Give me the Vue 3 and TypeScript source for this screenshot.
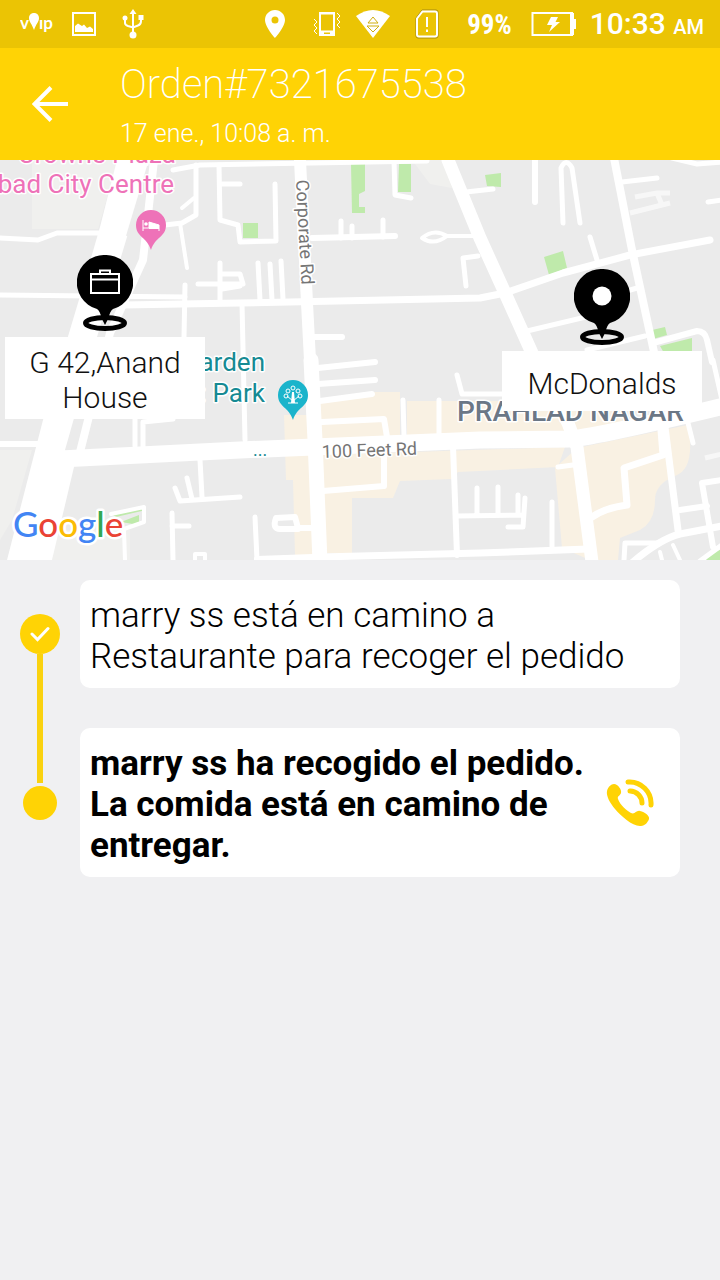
<script setup lang="ts">
interface Place {
  id: string
  name: string
  kind: 'home' | 'restaurant'
}

interface Step {
  id: number
  text: string
  done: boolean
}

const order = { number: 'Orden#7321675538', date: '17 ene., 10:08 a. m.' }

const places: Place[] = [
  { id: 'customer', name: 'G 42,Anand House', kind: 'home' },
  { id: 'restaurant', name: 'McDonalds', kind: 'restaurant' },
]

const steps: Step[] = [
  { id: 1, text: 'marry ss está en camino a Restaurante para recoger el pedido', done: true },
  { id: 2, text: 'marry ss ha recogido el pedido. La comida está en camino de entregar.', done: false },
]

const roads: { width: number; paths: string[] }[] = [
  {
    width: 4,
    paths: [
      'M180 223L187 268', 'M182 208L194 198', 'M445 236L475 236M422 238Q434 228 447 236Q434 246 422 238Z',
      'M673 545L680 560', 'M660 552L662 560', 'M195 562V554H205V562', 'M124 530L125 560',
      'M111 514L144 507V522L124 529',
    ],
  },
  {
    width: 5,
    paths: [
      'M173 170L200 165L427 161', 'M0 295L185 297', 'M0 238L38 240L57 233H99',
      'M196 165V215L182 223L165 225', 'M219 165L220 220L238 225L240 242L276 241L275 184', 'M222 184H240',
      'M185 285L184 337', 'M198 284H240M220 263V303M221 274H240L243 284M222 289L240 286',
      'M258 263L260 300M270 264L272 300M281 261L283 299',
      'M341 221V238M352 226V238M383 220V237', 'M394 160L395 195L411 198', 'M466 192L493 189',
      'M478 256L463 258L466 286', 'M242 303L245 440',
      'M563 223L561 168Q566 157 572 168L580 223', 'M590 237L597 260', 'M622 182L657 178', 'M708 202L722 200',
      'M627 291L637 288', 'M527 331L590 316', 'M587 350L645 336', 'M672 158L697 164L722 162',
      'M713 360L722 400', 'M135 415V446M143 446V422L173 419', 'M200 460L202 497M175 488L180 501L240 497M187 478L192 499',
      'M172 513L173 560M172 526H189', 'M403 400L404 435M439 400V433', 'M457 375L462 394H502',
      'M457 516L524 515M498 487V515M518 495V515M525 498L523 527H508M477 488V515', 'M552 502V550',
      'M255 517L257 560', 'M558 467L573 465', 'M688 423L693 443', 'M624 560L625 543L660 543', 'M700 561L722 545',
    ],
  },
  {
    width: 6,
    paths: [
      'M312 238L395 236', 'M312 337H342', 'M535 160V202', 'M653 343L697 331Q705 331 707 340L712 362',
      'M0 444H50', 'M318 368L375 362M318 384L375 380M320 401L372 394', 'M322 422L384 419L387 437',
      'M323 491L384 486V450', 'M453 446L457 555', 'M313 528H298L295 517L276 518Q272 529 280 529H298',
      'M680 510L707 506', 'M722 480L702 483L713 547', 'M257 559L313 557',
    ],
  },
  {
    width: 7,
    paths: [
      'M123 305L240 303L480 298L505 293L563 273L630 255L710 240', 'M320 557L480 553L588 549',
      'M661 430L663 455L624 468L627 505Q605 508 592 517', 'M665 427L678 530', 'M633 562Q660 539 680 534L722 526',
    ],
  },
  { width: 8, paths: ['M154 160L143 260L110 333L80 452', 'M614 158L632 250L654 352'] },
  { width: 12, paths: ['M300 160L307 303L310 360L313 400'] },
  { width: 13, paths: ['M448 160L480 238L505 293L532 353L568 423L577 447L592 562'] },
  { width: 15, paths: ['M311 360L315 440L320 562'] },
  { width: 17, paths: ['M60 459L240 450L480 440L570 439Q600 436 724 406'] },
]
</script>

<template>
  <div class="screen">
    <div class="status-bar">
      <div class="status-group notifications">
        <svg class="icon voip" viewBox="0 0 34 28" aria-label="voip">
          <text x="0" y="19" class="voip-text">v</text>
          <path d="M14 3C10.800 3 9 5.300 9 8C9 12 12 14 14 20C16 14 19 12 19 8C19 5.300 17.200 3 14 3Z" />
          <text x="19" y="19" class="voip-text">ıp</text>
        </svg>
        <svg class="icon picture" viewBox="0 0 24 24">
          <path class="line" d="M1 1H23V23H1Z" />
          <path d="M3 20V14L6 11.500L10 14L12 12.500L15 16L18 14.500L21 17V20Z" />
        </svg>
        <svg class="icon usb" viewBox="0 0 22 30">
          <path class="line" d="M11 4V25M3 9V14Q3 16 6 17L11 18.500L16 16.500Q19 15.500 19 12V9" />
          <path d="M7.500 5L11 0L14.500 5Z" />
          <circle cx="11" cy="26" r="3.500" />
          <circle cx="3" cy="9" r="2.500" />
          <path d="M16.500 6H21.500V11H16.500Z" />
        </svg>
      </div>
      <div class="status-group system">
        <svg class="icon location" viewBox="0 0 20 28">
          <path fill-rule="evenodd" d="M10 0C4.400 0 0 4.400 0 10C0 17 10 28 10 28S20 17 20 10C20 4.400 15.600 0 10 0ZM10 6.500A3.500 3.500 0 1 1 10 13.500A3.500 3.500 0 1 1 10 6.500Z" />
        </svg>
        <svg class="icon vibrate" viewBox="0 0 28 26">
          <path fill-rule="evenodd" d="M6 1H22V25H6ZM8 3.500V19.500H20V3.500ZM11 21.500V23H17V21.500Z" />
          <path class="thin" d="M1 8L4 11L1 14L4 17L1 20L4 23M24 2L27 5L24 8L27 11L24 14L27 17" />
        </svg>
        <svg class="icon wifi" viewBox="0 0 34 28">
          <path d="M0 6Q17 -6 34 6L17 28Z" />
          <path class="wifi-arrow" d="M17 7L22 13H12ZM11 16H23L17 22Z" />
        </svg>
        <svg class="icon sim" viewBox="0 0 24 30">
          <path class="sim-shade" d="M7 1H21Q23 1 23 3V27Q23 29 21 29H3Q1 29 1 27V9Z" />
          <path class="line" d="M7.500 2.500H20Q22 2.500 22 4.500V25.500Q22 27.500 20 27.500H4Q2 27.500 2 25.500V9.500Z" />
          <path class="line" d="M12 8V18M12 20.500V23" />
        </svg>
        <span class="battery-level">99%</span>
        <svg class="icon battery" viewBox="0 0 46 26">
          <path class="line" d="M1.500 2H41V24H1.500Z" />
          <path d="M39 2H43V8H45V18H43V24H39Z" />
          <path d="M20 6H27L24.500 11H29L18 21L21 14H16Z" />
        </svg>
        <span class="clock">10:33 <small>AM</small></span>
      </div>
    </div>

    <header class="app-bar">
      <button class="back" type="button" aria-label="Atrás">
        <svg viewBox="0 0 36 36"><path d="M36 18H3M19 1.500L2.500 18L19 34.500" /></svg>
      </button>
      <div class="titles">
        <h1>{{ order.number }}</h1>
        <p>{{ order.date }}</p>
      </div>
    </header>

    <section class="map" aria-label="Mapa">
      <svg class="map-canvas" viewBox="0 160 720 400" preserveAspectRatio="xMidYMid slice">
        <rect class="land" x="0" y="160" width="720" height="400" />
        <path class="pale" d="M32 160H118L98 229H32ZM0 450H32L12 520L0 540ZM412 160H447L452 188L430 184ZM56 530H130V560H52Z" />
        <path
          class="commercial"
          d="M320 400L370 392H400V440H320ZM407 401H565L590 411H622V436L407 445ZM284 415H310L313 555H295L293 480H286ZM322 455L565 447L558 467L458 472L452 479L400 481L393 498H352V553H326ZM577 448L688 425L690 440Q692 470 675 476Q655 484 655 500Q655 522 640 530L620 538L618 560H590L562 548L555 468Z"
        />
        <path
          class="park"
          d="M351 164H365V191L359 194V207H365V213H352ZM399 164H411V192H398ZM243 223H258V238H243ZM485 175L501 173V187L487 186ZM544 257L563 251L567 268L549 275ZM652 330L665 327L667 335L653 339ZM660 346L692 338V353H664ZM121 522L139 515V525ZM111 514L142 507L146 510L116 517ZM706 560Q711 550 720 550V560Z"
        />
        <path class="highway" d="M117 160H150L130 227L97 337L65 450L74 467L52 560H7L43 420L78 303L100 227Z" />
        <path class="divider" d="M148 166L127 236" />
        <path class="faint" d="M635 197L657 193H670M630 213L670 203M657 193L662 205M705 458L722 454" />
        <g v-for="road in roads" :key="road.width" class="road" :stroke-width="road.width">
          <path v-for="path in road.paths" :key="path" :d="path" />
        </g>

        <text class="poi hotel" x="176" y="163" text-anchor="end">Crowne Plaza</text>
        <text class="poi hotel" x="174" y="193" text-anchor="end">bad City Centre</text>
        <text class="poi garden" x="265" y="371" text-anchor="end">Garden</text>
        <text class="poi garden" x="265" y="402" text-anchor="end">: Park</text>
        <text class="street more" x="253" y="456">...</text>
        <text class="district" x="457" y="421">PRAHLAD NAGAR</text>
        <text class="street" transform="translate(296 180) rotate(87)">Corporate Rd</text>
        <text class="street" transform="translate(322 458) rotate(-2)">100 Feet Rd</text>

        <g class="hotel-pin">
          <path d="M151 210A15 15 0 0 0 136 225C136 237 147 237 151 250C155 237 166 237 166 225A15 15 0 0 0 151 210Z" />
          <path class="glyph" d="M143 220V231M143 228H159M159 231V225L149 222V228" />
          <circle class="glyph-fill" cx="146" cy="224" r="1.800" />
          <path class="glyph-fill" d="M149 222L159 225V229H149Z" />
        </g>
        <g class="garden-pin">
          <path d="M293 380A15 15 0 0 0 278 395C278 407 289 407 293 420C297 407 308 407 308 395A15 15 0 0 0 293 380Z" />
          <path class="glyph-fill" d="M292 392H294L295 403H291Z" />
          <path class="glyph" d="M288 403H298M293 401L287 396M293 401L299 396" />
          <g class="glyph">
            <circle cx="293" cy="388" r="2" /><circle cx="288" cy="391" r="2" /><circle cx="298" cy="391" r="2" />
            <circle cx="286" cy="396" r="2" /><circle cx="300" cy="396" r="2" />
          </g>
        </g>

        <text class="google" x="13" y="537"><tspan class="blue">G</tspan><tspan class="red">o</tspan><tspan class="yellow">o</tspan><tspan class="blue">g</tspan><tspan class="green">l</tspan><tspan class="red">e</tspan></text>
      </svg>

      <div v-for="place in places" :key="place.id" class="marker" :class="place.kind">
        <svg class="marker-pin" viewBox="0 0 56 76">
          <ellipse class="ring" cx="28" cy="68" rx="19.500" ry="5.500" />
          <path d="M28 0A27.500 27.500 0 0 0 20 54Q23 56 24.500 63L28 70L31.500 63Q33 56 36 54A27.500 27.500 0 0 0 28 0Z" />
          <path v-if="place.kind === 'home'" class="case" d="M14 19H42V38H14ZM14 24.500H42M23 19V15.500H33V19" />
          <circle v-else class="hole" cx="28" cy="27" r="9.500" />
        </svg>
        <span class="marker-label">{{ place.name }}</span>
      </div>
    </section>

    <main>
      <ol class="timeline">
        <li v-for="(step, index) in steps" :key="step.id" class="step">
          <div class="rail">
            <span class="segment" :class="{ line: index > 0, before: index > 0 }"></span>
            <span class="node" :class="{ done: step.done }">
              <svg v-if="step.done" viewBox="0 0 20 16"><path d="M2 8L7.500 13.500L18 2.500" /></svg>
            </span>
            <span class="segment" :class="{ line: index < steps.length - 1 }"></span>
          </div>
          <article class="card" :class="{ current: !step.done }">
            <p>{{ step.text }}</p>
            <button v-if="!step.done" class="call" type="button" aria-label="Llamar">
              <svg viewBox="0 0 48 48">
                <path d="M1 12C2 8 5 5 8 5C12 5 16 11 15 14C14 17 11 17 12 20C14 26 21 32 25 34C29 36 30 31 34 32C39 33 44 37 43 40C42 43 39 47 35 47C27 48 15 37 9 30C4 24 0 17 1 12Z" />
                <path class="wave" d="M24 12C31 12 36 18 36 24M22 3C35 2 46 13 45 26" />
              </svg>
            </button>
          </article>
        </li>
      </ol>
    </main>
  </div>
</template>

<style>
body {
  background: #f0f0f2;
}
</style>

<style scoped>
.screen {
  min-height: 100vh;
  background: #f0f0f2;
  color: #000;
  font-family: Roboto, sans-serif;
}

h1,
p,
ol {
  margin: 0;
  padding: 0;
}

button {
  padding: 0;
  border: 0;
  background: none;
}

svg {
  display: block;
}

.status-bar {
  display: flex;
  justify-content: space-between;
  align-items: center;
  height: 48px;
  padding: 0 16px 0 20px;
  background: #ebc404;
  color: #fff;
}

.status-group {
  display: flex;
  align-items: center;
}

.notifications {
  gap: 18px;
}

.icon {
  fill: #fff;
}

.icon .line {
  fill: none;
  stroke: #fff;
  stroke-width: 2;
}

.icon .thin {
  fill: none;
  stroke: #fff;
  stroke-width: 1;
}

.voip {
  width: 34px;
  height: 28px;
}

.voip-text {
  font: 700 17px Lato, sans-serif;
}

.picture {
  width: 24px;
  height: 24px;
}

.usb {
  width: 22px;
  height: 30px;
  margin-left: 8px;
}

.location {
  width: 20px;
  height: 28px;
  margin-right: 28px;
}

.vibrate {
  width: 28px;
  height: 26px;
  margin-right: 15px;
}

.wifi {
  width: 34px;
  height: 28px;
  margin-right: 25px;
}

.icon .wifi-arrow {
  fill: none;
  stroke: #d0ae10;
  stroke-width: 1;
}

.sim {
  width: 24px;
  height: 30px;
  margin-right: 28px;
}

.icon .sim-shade {
  fill: none;
  stroke: #a58b12;
  stroke-width: 1;
}

.battery-level {
  padding-top: 2px;
  font-family: "Roboto Condensed", Roboto, sans-serif;
  font-size: 27px;
  font-weight: 700;
  line-height: 32px;
}

.battery {
  width: 46px;
  height: 26px;
  margin: 0 13px 0 19px;
}

.clock {
  padding-top: 3px;
  font-size: 30px;
  font-weight: 500;
  line-height: 32px;
}

.clock small {
  font-size: 20px;
}

.app-bar {
  display: flex;
  align-items: center;
  height: 112px;
  background: #ffd305;
  color: #fff;
}

.back {
  display: grid;
  place-items: center;
  width: 100px;
  height: 100px;
}

.back svg {
  width: 36px;
  height: 36px;
  fill: none;
  stroke: #fff;
  stroke-width: 4;
}

.titles {
  padding: 8px 0 0 20px;
}

h1 {
  font-size: 40px;
  font-weight: 200;
  line-height: 52px;
}

.titles p {
  font-size: 25px;
  font-weight: 300;
  line-height: 46px;
}

.map {
  position: relative;
  height: 400px;
  overflow: hidden;
}

.map-canvas {
  width: 100%;
  height: 100%;
}

.land {
  fill: #ebebeb;
}

.pale {
  fill: #f0f0ee;
}

.commercial {
  fill: #f9f1e3;
}

.park {
  fill: #bfeaab;
}

.highway {
  fill: #fff;
}

.divider,
.faint {
  fill: none;
  stroke: #ebebeb;
  stroke-width: 2;
}

.faint {
  stroke: #f7f7f7;
  stroke-width: 5;
}

.road {
  fill: none;
  stroke: #fff;
  stroke-linecap: round;
  stroke-linejoin: round;
}

.poi,
.street,
.district,
.google {
  paint-order: stroke;
  stroke: #fff;
  stroke-width: 3px;
  stroke-linejoin: round;
}

.poi {
  font-size: 26px;
}

.hotel {
  fill: #ee72b8;
}

.garden {
  fill: #168a93;
}

.street {
  font-size: 18px;
  fill: #757575;
}

.more {
  fill: #168a93;
}

.district {
  font-size: 28px;
  font-weight: 500;
  fill: #6b7786;
}

.hotel-pin {
  fill: #ee72b8;
}

.garden-pin {
  fill: #1bb4cb;
}

.glyph {
  fill: none;
  stroke: #fff;
  stroke-width: 1;
}

.glyph-fill {
  fill: #fff;
}

.google {
  font: 500 35px Lato, sans-serif;
  stroke-width: 5px;
}

.blue {
  fill: #4285f4;
}

.red {
  fill: #ea4335;
}

.yellow {
  fill: #fbbc05;
}

.green {
  fill: #34a853;
}

.marker {
  position: absolute;
  display: flex;
  flex-direction: column;
  align-items: center;
  gap: 6px;
  width: 200px;
}

.marker.home {
  left: 5px;
  top: 95px;
}

.marker.restaurant {
  right: 18px;
  top: 109px;
}

.marker-pin {
  width: 56px;
  height: 76px;
}

.ring {
  fill: none;
  stroke: #000;
  stroke-width: 5;
}

.case {
  fill: none;
  stroke: #fff;
  stroke-width: 2;
}

.hole {
  fill: #fff;
}

.marker-label {
  display: flex;
  align-items: center;
  justify-content: center;
  box-sizing: border-box;
  width: 100%;
  min-height: 60px;
  padding: 8px 16px 4px;
  background: #fff;
  color: #111;
  font-size: 30px;
  font-weight: 300;
  line-height: 35px;
  text-align: center;
}

.timeline {
  list-style: none;
}

.step {
  display: flex;
  padding-right: 40px;
}

.rail {
  display: flex;
  flex: none;
  flex-direction: column;
  align-items: center;
  width: 80px;
}

.segment {
  flex: 1;
  width: 6px;
}

.segment.line {
  background: #fad20f;
}

.segment.before {
  margin-bottom: 3px;
}

.segment.before ~ .segment {
  margin-top: 3px;
}

.node {
  display: grid;
  place-items: center;
  width: 34px;
  height: 34px;
  border-radius: 50%;
  background: #ffd305;
}

.node.done {
  width: 40px;
  height: 40px;
}

.node svg {
  width: 20px;
  height: 16px;
  fill: none;
  stroke: #fff;
  stroke-width: 3;
  stroke-linecap: round;
}

.card {
  display: flex;
  flex: 1;
  align-items: center;
  margin: 20px 0;
  padding: 0 10px;
  border-radius: 10px;
  background: #fff;
}

.card p {
  flex: 1;
  padding: 15px 0 11px;
  font-size: 35px;
  font-weight: 300;
  line-height: 41px;
}

.card.current p {
  font-weight: 700;
}

.call {
  width: 48px;
  height: 48px;
  margin: 0 16px;
}

.call svg {
  width: 48px;
  height: 48px;
  fill: #ffd305;
}

.call .wave {
  fill: none;
  stroke: #ffd305;
  stroke-width: 5;
  stroke-linecap: round;
}
</style>
